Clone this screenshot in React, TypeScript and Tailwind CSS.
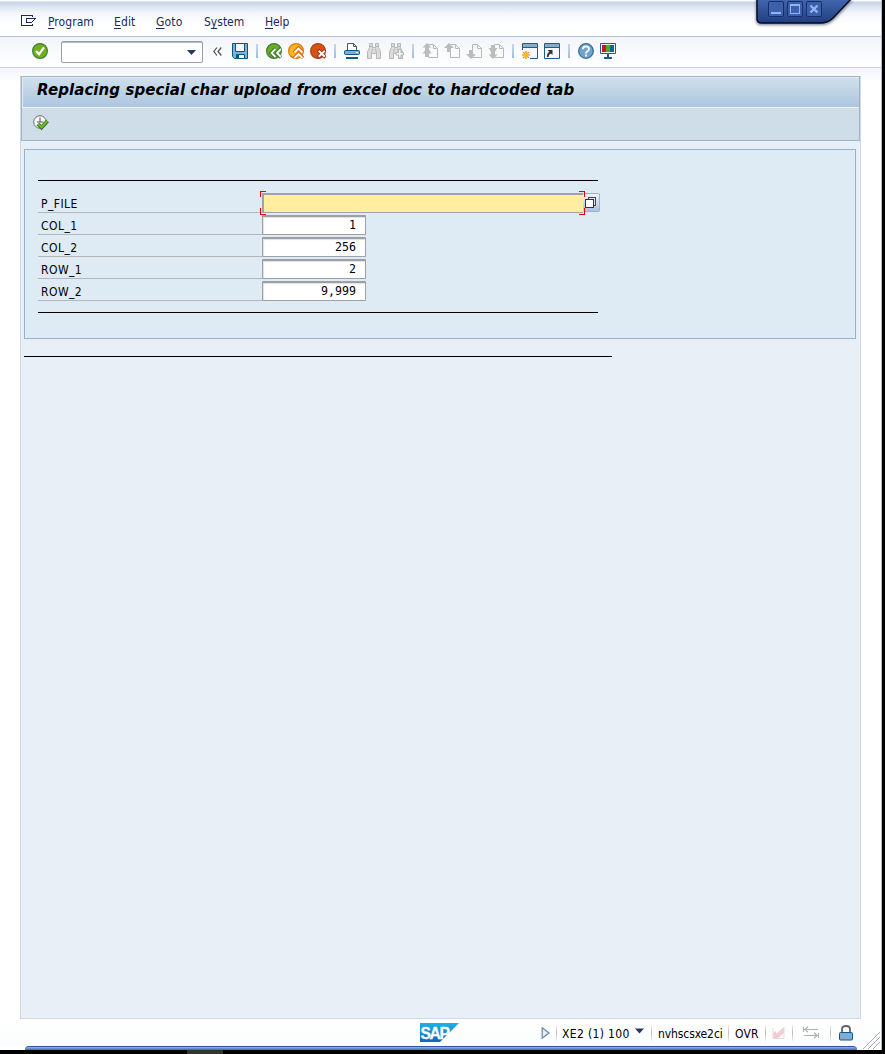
import type { ReactNode } from "react";

function Icon({ children, className = "" }: { children: ReactNode; className?: string }) {
  return (
    <svg viewBox="0 0 16 16" className={`h-4 w-4 shrink-0 ${className}`} fill="none">
      {children}
    </svg>
  );
}

function Separator() {
  return <div className="mx-[8px] h-[14px] w-[2px] shrink-0 bg-gradient-to-b from-[#c3d8ee] to-[#9dbde0]" />;
}

function PageIcon({ kind }: { kind: "first" | "prev" | "next" | "last" }) {
  return (
    <Icon>
      <path d="M6.5 1.5H11.5L15.5 5.5V14.5H6.5M11.5 1.5V5.5H15.5" stroke="#b9b9b9" />
      {kind === "prev" && <path d="M5 0L10 5H7V9H3V5H0Z" fill="#bcbcbc" />}
      {kind === "next" && <path d="M3 7H7V11H10L5 16L0 11H3Z" fill="#bcbcbc" />}
      {kind === "prev" && <path d="M6.5 9V14.5" stroke="#b9b9b9" />}
      {kind === "next" && <path d="M6.5 1.5V7" stroke="#b9b9b9" />}
      {kind === "first" && <path d="M5 0L9.500 4.500H7V6.500L9.500 10.500H7V14H3V10.500H.5L3 7.500V4.500H.5Z" fill="#bcbcbc" />}
      {kind === "last" && <path d="M3 2H7V5H9.500L7 8.500V11.500H9.500L5 16L.5 11.500H3V8.500L.5 5H3Z" fill="#bcbcbc" />}
    </Icon>
  );
}

function Binoculars({ plus = false }: { plus?: boolean }) {
  return (
    <Icon>
      <path
        d="M3.5 .5H6.5V4.5H9.5V.5H12.5V4.5L14.5 9V15.5H10.5V10.5H5.5V15.5H1.5V9L3.5 4.5Z"
        fill="#dcdcdc"
        stroke="#b9b9b9"
      />
      <path d="M3.5 3.5H6.5M9.5 3.5H12.5M6.5 5.5L5.5 10.5M9.5 5.5L10.5 10.5" stroke="#b9b9b9" />
      {plus && (
        <path d="M10.5 6.5H13V9.5H15.5V12H13V15H10.5V12H8V9.5H10.5Z" fill="#f1f1f1" stroke="#b4b4b4" />
      )}
    </Icon>
  );
}

function Toolbar() {
  return (
    <div className="flex h-[31px] shrink-0 items-center border-b border-[#c9cddc] bg-gradient-to-b from-[#f3f5fa] to-white pb-[2px] pl-8">
      <Icon>
        <circle cx="8" cy="8" r="7.4" fill="#6fb01c" stroke="#43813a" strokeWidth="1.2" />
        <path d="M4 8L7 11.3L12 4.3" stroke="#fff" strokeWidth="2.2" />
      </Icon>
      <div className="ml-[13px] mt-[2px] flex h-[22px] w-[142px] shrink-0 items-center justify-end rounded-[2px] border border-[#9b9da4] bg-white pr-[6px] shadow-[inset_0_1px_0_#b8babf]">
        <svg width="9" height="5">
          <path d="M0 0H9L4.5 5Z" fill="#223869" />
        </svg>
      </div>
      <svg width="9" height="9" className="ml-[10px] shrink-0" fill="none">
        <path d="M4 0.5L0.8 4.5L4 8.5M8.3 0.5L5 4.5L8.3 8.5" stroke="#4c4c54" strokeWidth="1.2" />
      </svg>
      <Icon className="ml-[10px]">
        <path d="M.5 .5H15.5V15.5H2.5L.5 13.5Z" fill="#84afd1" stroke="#075685" />
        <path d="M3.5 .5H12.5V8.5H3.5Z" fill="#f4f7fb" stroke="#075685" />
        <path d="M4.5 11.5H12.5V15.5H4.5Z" fill="#fff" stroke="#075685" />
        <path d="M5 12H7V15H5Z" fill="#075685" />
      </Icon>
      <Separator />
      <div className="flex gap-[6px]">
        <Icon>
          <circle cx="8" cy="8" r="7.4" fill="#6eae1a" stroke="#3e7d3e" strokeWidth="1.2" />
          <path d="M9.500 5.500L5 10L9.500 14.500M15 5.500L10.500 10L15 14.500" stroke="#39743a" strokeWidth="3.400" />
          <path d="M9.500 6L5.500 10L9.500 14M15 6L11 10L15 14" stroke="#fff" strokeWidth="1.800" />
        </Icon>
        <Icon>
          <circle cx="8" cy="8" r="7.4" fill="#fdb913" stroke="#e67717" strokeWidth="1.2" />
          <path d="M6 9.500L10.500 5L15 9.500M6 15L10.500 10.500L15 15" stroke="#d9651b" strokeWidth="3.400" />
          <path d="M6.500 9.500L10.500 5.500L14.500 9.500M6.500 15L10.500 11L14.500 15" stroke="#fff" strokeWidth="1.800" />
        </Icon>
        <Icon>
          <circle cx="8" cy="8" r="7.4" fill="#d65313" stroke="#b9401a" strokeWidth="1.2" />
          <path d="M8 7L15.500 14.500M15.500 7L8 14.500" stroke="#9c2413" strokeWidth="3.600" />
          <path d="M8.700 7.700L14.800 13.800M14.800 7.700L8.700 13.800" stroke="#fff" strokeWidth="2" />
        </Icon>
      </div>
      <Separator />
      <div className="flex gap-[6px]">
        <Icon>
          <path d="M3.5 8V.5H9.5L12.5 3.5V8M9.5 .5V3.5H12.5" fill="#fff" stroke="#555" />
          <rect x=".5" y="7.5" width="15" height="4" rx="1" fill="#83add0" stroke="#155786" />
          <path d="M12 9.5H14" stroke="#fff" />
          <path d="M2 15H14" stroke="#155786" strokeWidth="2" />
        </Icon>
        <Binoculars />
        <Binoculars plus />
      </div>
      <Separator />
      <div className="flex gap-[6px]">
        <PageIcon kind="first" />
        <PageIcon kind="prev" />
        <PageIcon kind="next" />
        <PageIcon kind="last" />
      </div>
      <Separator />
      <div className="flex gap-[6px]">
        <Icon>
          <path d="M.5 .5H15.5V15.5H.5Z" fill="#f5f8fc" stroke="#1a5c8c" />
          <path d="M1 1H15V4H1Z" fill="#83add0" />
          <path d="M1 4.5H15" stroke="#1a5c8c" />
          <path d="M0 7H8V16H0Z" fill="#f6f8fb" />
          <path d="M4 8V16M0 12H8M1.2 9.2L6.8 14.8M6.8 9.2L1.2 14.8" stroke="#e87a16" strokeWidth="1.2" />
          <circle cx="4" cy="12" r="2.500" fill="#fdba12" />
        </Icon>
        <Icon>
          <path d="M.5 .5H15.5V15.5H.5Z" fill="#f5f8fc" stroke="#1a5c8c" />
          <path d="M1 1H15V4H1Z" fill="#83add0" />
          <path d="M1 4.5H15" stroke="#1a5c8c" />
          <path d="M4 14C3.500 11 4.500 10 7 9.500" stroke="#333" strokeWidth="1.800" />
          <path d="M3.500 7H8.500V12Z" fill="#333" />
        </Icon>
      </div>
      <Separator />
      <div className="flex gap-[6px]">
        <Icon>
          <circle cx="8" cy="8" r="7.3" fill="#75a3ca" stroke="#336d9c" strokeWidth="1.3" />
          <path d="M5 6.2C5 2.5 11 2.5 11 6.2C11 8 8 8 8 10.5" stroke="#fff" strokeWidth="1.8" />
          <path d="M7 11.6H9V13.4H7Z" fill="#fff" />
        </Icon>
        <Icon>
          <path d="M.500 .500H15.500V10.500H.500Z" fill="#eaf3fb" stroke="#17608f" />
          <path d="M2 2H6V9H2Z" fill="#c51a15" />
          <path d="M6 2H10V9H6Z" fill="#55aa16" />
          <path d="M10 2H14V9H10Z" fill="#0b679e" />
          <path d="M8 11V14M4 15H12" stroke="#17608f" strokeWidth="2" />
        </Icon>
      </div>
    </div>
  );
}

const menus = [
  { key: "P", rest: "rogram", before: "", box: "w-[66px]", spacing: "tracking-[0.050px]" },
  { key: "E", rest: "dit", before: "", box: "w-[42px]", spacing: "tracking-[0.100px]" },
  { key: "G", rest: "oto", before: "", box: "w-[48px]", spacing: "tracking-[0.150px]" },
  { key: "y", rest: "stem", before: "S", box: "w-[61px]", spacing: "tracking-[0.000px]" },
  { key: "H", rest: "elp", before: "", box: "w-[30px]", spacing: "tracking-[-0.100px]" },
];

function MenuBar() {
  return (
    <div className="flex h-[37px] shrink-0 items-center border-b border-[#b9c5dc] bg-[linear-gradient(#ffffff_0_1px,#c5d1e7_2px,#e3e9f4_8px,#f4f7fb_14px,#ffffff_24px)] pl-[21px] pt-[6px] text-[12px] text-[#172a5b]">
      <svg width="15" height="12" className="mr-[12px] shrink-0" fill="none" shapeRendering="crispEdges">
        <path d="M11.5 2V.5H.5V10.5H11.5V9" stroke="#172a5b" />
        <path d="M5.5 3.5H14.5L10.5 7.5H5.5Z" stroke="#172a5b" />
      </svg>
      {menus.map((m) => (
        <span key={m.key} className={`shrink-0 whitespace-nowrap pt-[2px] ${m.box} ${m.spacing}`}>
          {m.before}
          <span className="underline decoration-1 underline-offset-2">{m.key}</span>
          {m.rest}
        </span>
      ))}
    </div>
  );
}

function WindowControls() {
  return (
    <svg width="110" height="32" className="absolute left-[749px] top-0" fill="none">
      <defs>
        <linearGradient id="tab" x1="0" y1="0" x2="0" y2="1">
          <stop offset="0" stopColor="#4267ae" />
          <stop offset="1" stopColor="#203d82" />
        </linearGradient>
        <filter id="shade" x="-10%" y="-10%" width="120%" height="140%">
          <feGaussianBlur stdDeviation="1.4" />
        </filter>
      </defs>
      <path d="M7 0V20Q7 25 12 25H72Q80 25 86 19L104 0Z" fill="#777f91" filter="url(#shade)" />
      <path d="M8 -1V19Q8 23 13 23H71Q79 23 84 18L102 -1Z" fill="url(#tab)" stroke="#070d21" strokeWidth="1.5" />
      <g stroke="#172e68">
        <rect x="19.500" y="1.500" width="15" height="15" rx="1.500" fill="#3d60aa" />
        <rect x="38.500" y="1.500" width="15" height="15" rx="1.500" fill="#3d60aa" />
        <rect x="57.500" y="1.500" width="15" height="15" rx="1.500" fill="#3d60aa" />
      </g>
      <g shapeRendering="crispEdges">
        <path d="M22 13H32" stroke="#8eb5fa" strokeWidth="2" />
        <path d="M41.500 5V13.500H50.500V5M41 5H51" stroke="#8eb5fa" />
        <path d="M41 5H51" stroke="#8eb5fa" strokeWidth="2" />
      </g>
      <path d="M61.500 5.500L68.500 12.500M68.500 5.500L61.500 12.500" stroke="#8eb5fa" strokeWidth="2.400" />
    </svg>
  );
}

const rows = [
  { name: "COL_1", value: "1" },
  { name: "COL_2", value: "256" },
  { name: "ROW_1", value: "2" },
  { name: "ROW_2", value: "9,999" },
];

function SelectionForm() {
  return (
    <div className="ml-[3px] mt-[8px] h-[190px] w-[832px] border border-[#93b2d0] bg-[#deeaf4] pl-[13px] pt-[30px]">
      <div className="h-px w-[560px] bg-black" />
      <div className="mt-[10px] flex h-[22px] w-[564px]">
        <div className="h-[22px] w-[224px] border-b border-[#b3b7bc] pl-[3px] pt-[5px] text-[12px] leading-[17px] tracking-[0.450px]">
          P_FILE
        </div>
        <div className="relative mt-[2px] h-[20px] w-[321px] border-2 border-b border-r-0 border-[#a0a2a4] bg-[#ffee9f]">
          <svg width="325" height="24" className="absolute -left-[4px] -top-[4px]" fill="none" shapeRendering="crispEdges">
            <path d="M6 .5H.5V6M.5 17V23.500H6M319 .5H324.500V6M324.500 17V23.500H319" stroke="#e00009" />
          </svg>
        </div>
        <div className="mt-[2px] flex h-[19px] w-[17px] items-center justify-center rounded-[2px] border border-l-0 border-[#a8afba] bg-gradient-to-b from-[#f0f4f9] to-[#aac1e5]">
          <svg width="12" height="12" fill="none" shapeRendering="crispEdges">
            <path d="M3.500 .5H10.500V8.500H3.500Z" fill="#dce3ec" stroke="#44464a" />
            <path d="M.5 2.500H8.500V10.500H.5Z" fill="#fff" stroke="#333" />
          </svg>
        </div>
      </div>
      {rows.map((row) => (
        <div key={row.name} className="flex h-[22px] w-[328px]">
          <div className="h-[22px] w-[224px] border-b border-[#b3b7bc] pl-[3px] pt-[5px] text-[12px] leading-[17px] tracking-[0.450px]">
            {row.name}
          </div>
          <div className="mt-[2px] h-[20px] w-[104px] rounded-[1px] border border-t-2 border-[#9c9fa3] bg-white pr-[9px] text-right font-['DejaVu_Sans_Mono',monospace] text-[11.600px] leading-[17px] shadow-[inset_1px_1px_1px_#e0e0e0]">
            {row.value}
          </div>
        </div>
      ))}
      <div className="mt-[11px] h-px w-[560px] bg-black" />
    </div>
  );
}

function StatusDivider({ className }: { className: string }) {
  return <div className={`h-4 w-px shrink-0 bg-gradient-to-b from-[#eeeeee] via-[#bbbbbb] to-[#eeeeee] ${className}`} />;
}

function StatusBar() {
  return (
    <div className="relative flex h-[27px] shrink-0 items-center bg-gradient-to-b from-white to-[#fbfcfd] pl-[420px] text-[12px]">
      <svg width="39" height="19" className="shrink-0">
        <defs>
          <linearGradient id="logo" x1="0" y1="0" x2="0" y2="1">
            <stop offset="0" stopColor="#16b5eb" />
            <stop offset="1" stopColor="#1464b5" />
          </linearGradient>
        </defs>
        <path d="M0 0H39L20 19H0Z" fill="url(#logo)" />
        <text
          x="0.500"
          y="15.500"
          fill="#fff"
          fontFamily="Liberation Sans, sans-serif"
          fontSize="17"
          fontWeight="700"
          textLength="28"
          lengthAdjust="spacingAndGlyphs"
          letterSpacing="-1.500"
          stroke="#fff"
          strokeWidth=".3"
        >
          SAP
        </text>
      </svg>
      <svg width="9" height="12" className="ml-[82px] shrink-0">
        <path d="M1.200 .8L8 6L1.200 11.200Z" fill="#e5edf5" stroke="#6589a8" strokeWidth="1.200" />
      </svg>
      <StatusDivider className="ml-[6px]" />
      <span className="ml-[5px] w-[73px] shrink-0 whitespace-nowrap pt-[2px] tracking-[0.350px]">XE2 (1) 100</span>
      <svg width="9" height="6" className="-mt-1 shrink-0">
        <path d="M0 .5H9L4.500 5.500Z" fill="#223869" />
      </svg>
      <StatusDivider className="ml-[7px]" />
      <span className="ml-[6px] w-[66px] shrink-0 whitespace-nowrap pt-[2px] tracking-[-0.100px]">nvhscsxe2ci</span>
      <StatusDivider className="ml-[4px]" />
      <span className="ml-[6px] w-[26px] shrink-0 whitespace-nowrap pt-[2px] tracking-[0.200px]">OVR</span>
      <StatusDivider className="ml-[4px]" />
      <svg width="13" height="13" className="ml-[6px] shrink-0">
        <path d="M1 7L4 5V8L12 1V7L6 12H1Z" fill="#f5cbd3" />
        <path d="M1 2V12.500H12V1" fill="none" stroke="#ead9df" />
      </svg>
      <StatusDivider className="ml-[7px]" />
      <svg width="18" height="13" className="ml-[9px] shrink-0" fill="none">
        <path d="M1.500 1V6M2 3.500H16M6 .8L3 3.500L6 6.200M16.500 7V12M2 9.500H16M12 6.800L15 9.500L12 12.200" stroke="#b0b0b0" strokeWidth="1.200" />
      </svg>
      <StatusDivider className="ml-[10px]" />
      <svg width="14" height="16" className="ml-[8px] shrink-0" fill="none">
        <path d="M3 8V4Q3 1 7 1T11 4V8" stroke="#5e6266" strokeWidth="1.800" />
        <rect x=".5" y="7.500" width="13" height="7.500" rx="1" fill="#83add0" stroke="#125784" />
      </svg>
      <svg width="18" height="20" className="absolute bottom-[-4px] right-0" fill="none">
        <path d="M0 19L17 2M5 19L17 7M10 19L17 12" stroke="#a3a8bd" />
      </svg>
    </div>
  );
}

export default function App() {
  return (
    <div className="flex h-[1054px] w-[885px] flex-col overflow-hidden bg-black font-['DejaVu_Sans_Condensed','DejaVu_Sans',sans-serif] [font-stretch:condensed] text-black">
      <div className="relative flex h-[1050px] w-[882px] flex-col border-r border-[#b4bccc] bg-white">
        <MenuBar />
        <Toolbar />
        <main className="flex h-[951px] shrink-0 flex-col bg-[linear-gradient(#f1f4f9,#ffffff_14px)] pl-[20px]">
          <div className="mt-[8px] h-[943px] w-[841px] border border-t-0 border-[#d0d8e4] bg-[#e8eff6]">
            <header className="h-[65px] w-[839px] border border-[#9fb4c8] bg-[#cfdde8]">
              <h1 className="h-[30px] whitespace-nowrap border-l border-t border-[#e0ebf3] bg-gradient-to-b from-[#cfe0ec] to-[#adc5dd] pl-[14px] font-['DejaVu_Sans',sans-serif] text-[15px] font-bold italic leading-[25px] tracking-[0.080px] [font-stretch:normal]">
                Replacing special char upload from excel doc to hardcoded tab
              </h1>
              <div className="border-t border-[#eaf2f8] pl-[11px] pt-[7px]">
                <Icon>
                  <circle cx="7" cy="7" r="6.300" fill="#f8f8f8" stroke="#686b6e" />
                  <path d="M7 2.500V7H10.500M4 7H7" stroke="#555" />
                  <path d="M5 9L8.500 12.500L14.500 6" stroke="#267321" strokeWidth="3.800" />
                  <path d="M5.300 9L8.500 12.200L14.300 6" stroke="#73b92d" strokeWidth="2" />
                </Icon>
              </div>
            </header>
            <SelectionForm />
            <div className="ml-[3px] mt-[17px] h-px w-[588px] bg-black" />
          </div>
        </main>
        <StatusBar />
        <div className="ml-[25px] h-[4px] w-[832px] shrink-0 rounded-t-[8px] border-t border-[#3552a3] bg-gradient-to-b from-[#94b8ee] to-[#3e63b5]" />
        <WindowControls />
      </div>
      <div className="ml-[187px] h-[4px] w-[36px] bg-[#343434]" />
    </div>
  );
}
